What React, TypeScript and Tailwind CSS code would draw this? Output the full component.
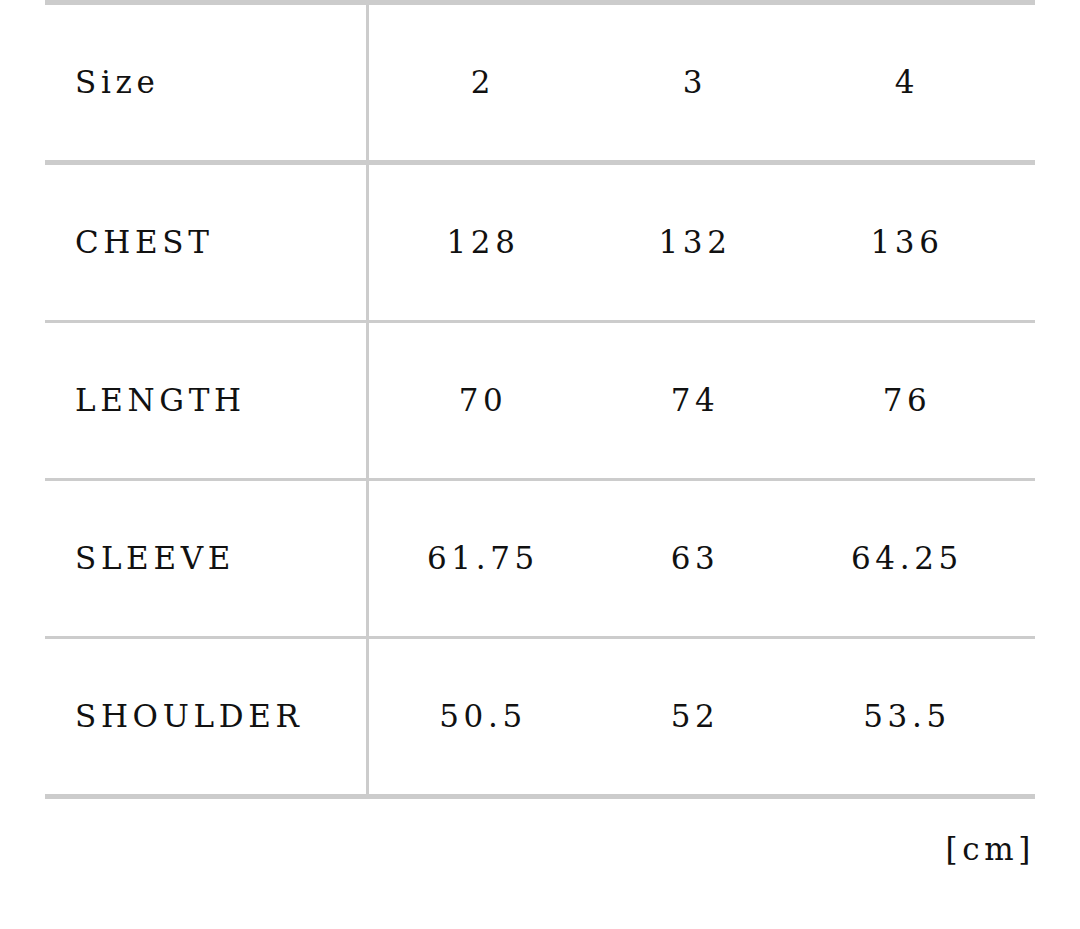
import React from "react";

const rows: { label: string; values: string[] }[] = [
  { label: "CHEST", values: ["128", "132", "136"] },
  { label: "LENGTH", values: ["70", "74", "76"] },
  { label: "SLEEVE", values: ["61.75", "63", "64.25"] },
  { label: "SHOULDER", values: ["50.5", "52", "53.5"] },
];

function Row({ label, values, header }: { label: string; values: string[]; header?: boolean }) {
  return (
    <div
      className={
        header
          ? "flex h-[165px] border-y-[5px] border-[#cccccc]"
          : "flex h-[158px] border-b-[3px] border-[#cccccc] last:h-[160px] last:border-b-[5px]"
      }
    >
      <div className="flex w-[324px] shrink-0 items-center border-r-[3px] border-[#cccccc] pl-[30px]">
        <span className="tracking-[0.15em]">{label}</span>
      </div>
      <div className="flex flex-1 items-center pl-[8px]">
        {values.map((v) => (
          <div key={v + label} className="w-[212px] text-center">
            <span className="tracking-[0.15em]">{v}</span>
          </div>
        ))}
      </div>
    </div>
  );
}

export default function App() {
  return (
    <div
      className="min-h-[929px] w-[1080px] bg-white px-[45px] text-[31px] text-[#111111]"
      style={{ fontFamily: '"DejaVu Serif", "Liberation Serif", serif' }}
    >
      <div className="flex flex-col">
        <Row label="Size" values={["2", "3", "4"]} header />
        {rows.map((r) => (
          <Row key={r.label} label={r.label} values={r.values} />
        ))}
      </div>
      <div className="mt-[27px] text-right">
        <span className="tracking-[0.15em]">[cm]</span>
      </div>
    </div>
  );
}
